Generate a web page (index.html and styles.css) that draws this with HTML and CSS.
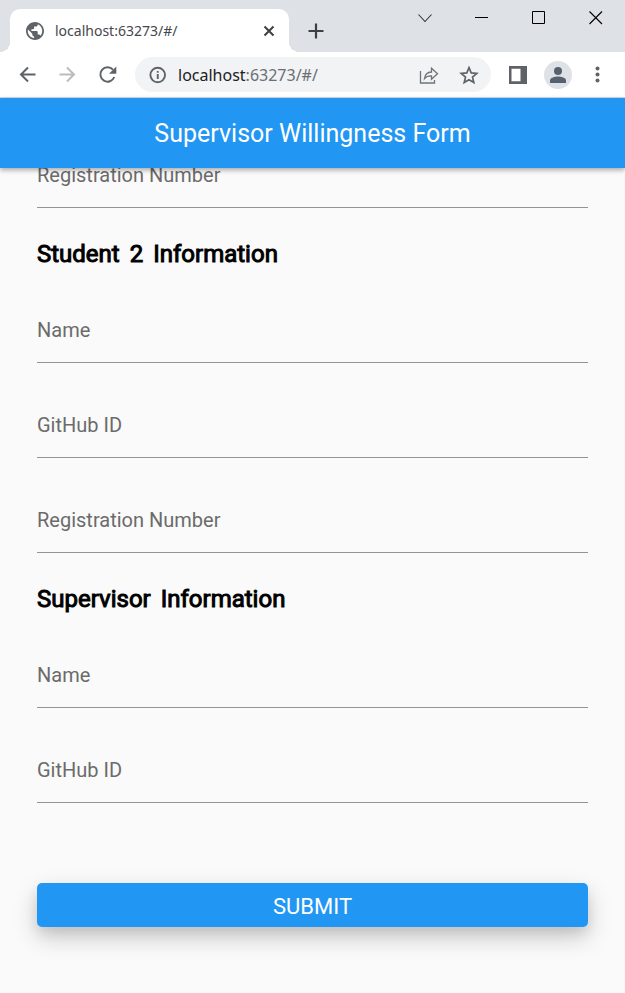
FILE: index.html
```html
<!DOCTYPE html>
<html lang="en">
<head>
<meta charset="utf-8">
<meta name="viewport" content="width=device-width, initial-scale=1">
<title>Supervisor Willingness Form</title>
<link rel="stylesheet" href="styles.css">
</head>
<body>
<div class="tab-strip">
  <div class="tab">
    <svg class="icon" width="18" height="18" viewBox="2 2 20 20" aria-hidden="true"><path fill="#5f6368" d="M12 2C6.480 2 2 6.480 2 12s4.480 10 10 10 10-4.480 10-10S17.520 2 12 2zm-1 17.930c-3.950-.490-7-3.850-7-7.930 0-.620.080-1.210.210-1.790L9 15v1c0 1.100.900 2 2 2v1.930zm6.900-2.540c-.260-.810-1-1.390-1.900-1.390h-1v-3c0-.550-.450-1-1-1H8v-2h2c.550 0 1-.450 1-1V7h2c1.100 0 2-.900 2-2v-.410c2.930 1.190 5 4.060 5 7.410 0 2.080-.800 3.970-2.100 5.390z"/></svg>
    <span class="tab-title">localhost:63273/#/</span>
    <button class="plain" aria-label="Close tab"><svg class="icon" width="12" height="12" viewBox="0 0 12 12"><path d="m1.5 1.5 9 9m0-9-9 9" fill="none" stroke="#3c4043" stroke-width="2"/></svg></button>
  </div>
  <button class="plain new-tab" aria-label="New tab"><svg class="icon" width="16" height="16" viewBox="0 0 16 16"><path d="M8 .5v15M.5 8h15" fill="none" stroke="#3c4043" stroke-width="2.2"/></svg></button>
  <div class="window-controls">
    <button class="plain" aria-label="Search tabs"><svg class="icon" width="14" height="14" viewBox="0 0 14 14"><path d="m.5 3.5 6.5 7 6.5-7" fill="none" stroke="#333" stroke-width="1.1"/></svg></button>
    <button class="plain" aria-label="Minimize"><svg class="icon" width="14" height="14" viewBox="0 0 14 14"><path d="M0 6.5h13" stroke="#000"/></svg></button>
    <button class="plain" aria-label="Maximize"><svg class="icon" width="14" height="14" viewBox="0 0 14 14"><path d="M.5.5h12v12H.5z" fill="none" stroke="#000"/></svg></button>
    <button class="plain" aria-label="Close"><svg class="icon" width="14" height="14" viewBox="0 0 14 14"><path d="m.5.5 12.500 12.500M13 .5.500 13" fill="none" stroke="#000" stroke-width="1.1"/></svg></button>
  </div>
</div>
<div class="toolbar">
  <div class="nav">
    <button class="plain" aria-label="Back"><svg class="icon" width="20" height="20" viewBox="0 0 20 20"><path d="M17.500 9.500H3m7-7L3 9.500l7 7" fill="none" stroke="#5f6368" stroke-width="2"/></svg></button>
    <button class="plain" aria-label="Forward"><svg class="icon" width="20" height="20" viewBox="0 0 20 20"><path d="M1.500 9.500H16m-7-7 7 7-7 7" fill="none" stroke="#babcbe" stroke-width="2"/></svg></button>
    <button class="plain" aria-label="Reload"><svg class="icon" width="20" height="20" viewBox="0 0 20 20"><path d="M16.300 12A7.200 7.200 0 1 1 15 4.700" fill="none" stroke="#5f6368" stroke-width="2"/><path d="M18.300 1.500v7.300H11Z" fill="#5f6368"/></svg></button>
  </div>
  <div class="omnibox">
    <svg class="icon" width="18" height="18" viewBox="0 0 18 18" aria-hidden="true"><circle cx="8.700" cy="9" r="7.300" fill="none" stroke="#5f6368" stroke-width="1.900"/><path d="M7.800 8h1.900v5H7.800zM7.800 5h1.900v1.800H7.800z" fill="#5f6368"/></svg>
    <span class="url"><span class="host">localhost</span>:63273/#/</span>
    <button class="plain" aria-label="Share"><svg class="icon" width="20" height="20" viewBox="0 0 20 20"><path d="M1.500 6v12h14v-3M5.500 13.500C6 9.500 8.500 7.200 12.500 7V3.200l6 5.600-6 5.400v-3.400c-3.200-.1-5.400.7-7 2.700Z" fill="none" stroke="#6f7377" stroke-width="1.300"/></svg></button>
    <button class="plain" aria-label="Bookmark"><svg class="icon" width="20" height="20" viewBox="0 0 20 20"><path d="m10 2.700 2.200 5.200 5.600.5-4.300 3.700 1.300 5.500L10 14.700l-4.800 2.900 1.300-5.500-4.300-3.700 5.600-.5Z" fill="none" stroke="#5f6368" stroke-width="1.700"/></svg></button>
  </div>
  <div class="actions">
    <button class="plain" aria-label="Side panel"><svg class="icon" width="18" height="18" viewBox="0 0 18 18"><path fill-rule="evenodd" d="M0 0h18v18H0ZM2.500 2.800v12.400h9V2.800Z" fill="#5f6368"/></svg></button>
    <button class="plain avatar" aria-label="Profile"><svg class="icon" width="16" height="16" viewBox="0 0 16 16"><circle cx="8" cy="4" r="4" fill="#56606f"/><path d="M0 16v-2.500C0 10.500 5 9.500 8 9.500s8 1 8 4V16Z" fill="#56606f"/></svg></button>
    <button class="plain" aria-label="Menu"><svg class="icon" width="18" height="18" viewBox="0 0 18 18"><g fill="#5f6368"><circle cx="8.500" cy="2.500" r="2"/><circle cx="8.500" cy="8.500" r="2"/><circle cx="8.500" cy="14.500" r="2"/></g></svg></button>
  </div>
</div>
<header class="app-bar"><h1>Supervisor Willingness Form</h1></header>
<main class="page">
  <form class="form">
    <div class="field"><label for="s1-reg">Registration Number</label><input id="s1-reg" type="text"></div>
    <h2><span>Student</span> <span>2</span> <span>Information</span></h2>
    <div class="field"><label for="s2-name">Name</label><input id="s2-name" type="text"></div>
    <div class="field"><label for="s2-git">GitHub ID</label><input id="s2-git" type="text"></div>
    <div class="field"><label for="s2-reg">Registration Number</label><input id="s2-reg" type="text"></div>
    <h2><span>Supervisor</span> <span>Information</span></h2>
    <div class="field"><label for="sup-name">Name</label><input id="sup-name" type="text"></div>
    <div class="field"><label for="sup-git">GitHub ID</label><input id="sup-git" type="text"></div>
    <button class="submit" type="button">SUBMIT</button>
  </form>
</main>
</body>
</html>
```
FILE: styles.css
```css
* { box-sizing: border-box; }

body {
  margin: 0;
  min-height: 100vh;
  display: flex;
  flex-direction: column;
  background: #fafafa;
  font-family: Roboto, sans-serif;
}

.icon { display: block; flex: none; }

.plain {
  display: flex;
  align-items: center;
  justify-content: center;
  padding: 0;
  border: 0;
  background: none;
}

/* Browser tab strip */
.tab-strip {
  display: flex;
  height: 52px;
  padding: 9px 22px 0 10px;
  background: #dee1e6;
  font-family: "Noto Sans", sans-serif;
}

.tab {
  position: relative;
  display: flex;
  align-items: center;
  gap: 11px;
  flex: 0 1 279px;
  padding: 0 14px 0 16px;
  border-radius: 10px 10px 0 0;
  background: #fff;
}

.tab::before,
.tab::after {
  content: "";
  position: absolute;
  bottom: 0;
  width: 10px;
  height: 10px;
}

.tab::before {
  right: 100%;
  background: radial-gradient(circle at 0 0, #dee1e6 10px, #fff 10px);
}

.tab::after {
  left: 100%;
  background: radial-gradient(circle at 100% 0, #dee1e6 10px, #fff 10px);
}

.tab-title {
  flex: 1;
  font-size: 14px;
  color: #45484c;
}

.new-tab { margin-left: 19px; }

.window-controls {
  display: flex;
  align-items: flex-start;
  gap: 43px;
  margin-left: auto;
  padding-top: 2px;
}

/* Browser toolbar */
.toolbar {
  display: flex;
  align-items: center;
  height: 46px;
  padding: 0 18px;
  border-bottom: 1px solid #d5dce3;
  background: #fff;
}

.nav { display: flex; gap: 20px; }

.omnibox {
  display: flex;
  align-items: center;
  gap: 20px;
  flex: 1;
  height: 35px;
  margin: 0 18px 0 17px;
  padding: 0 12px 0 14px;
  border-radius: 18px;
  background: #f1f3f4;
  font-family: "Noto Sans", sans-serif;
}

.url {
  flex: 1;
  margin-left: -9px;
  font-size: 16px;
  color: #6b6f73;
}

.host { color: #202124; }

.actions { display: flex; align-items: center; gap: 17px; }

.avatar {
  width: 28px;
  height: 28px;
  border-radius: 50%;
  background: #dee1e6;
}

/* Application */
.app-bar {
  position: relative;
  z-index: 1;
  display: flex;
  align-items: center;
  justify-content: center;
  height: 70px;
  background: #2196f3;
  box-shadow: 0 2px 5px rgba(0, 0, 0, 0.34);
}

.app-bar h1 {
  margin: 0;
  font-size: 25px;
  font-weight: 400;
  color: #fff;
}

.page {
  flex: 1;
  padding: 0 37px 66px;
}

/* The form rests scrolled partly under the app bar. */
.form {
  display: flex;
  flex-direction: column;
  gap: 30px;
  margin-top: -25px;
}

.field { display: grid; height: 65px; }

.field label,
.field input {
  grid-area: 1 / 1;
  font: 400 20px/24px Roboto, sans-serif;
}

.field label {
  align-self: center;
  padding-bottom: 2px;
  color: #6b6b6b;
}

.field input {
  width: 100%;
  padding: 0;
  border: 0;
  border-bottom: 1px solid #949494;
  background: none;
  outline: none;
}

h2 {
  display: flex;
  gap: 10px;
  margin: 0;
  padding-top: 2px;
  font-size: 24px;
  font-weight: 400;
  line-height: 28px;
  color: #000;
  -webkit-text-stroke: 1px #000;
}

.submit {
  height: 44px;
  margin-top: 50px;
  padding: 3px 0 0;
  border: 0;
  border-radius: 5px;
  background: #2196f3;
  box-shadow: 0 10px 25px rgba(0, 0, 0, 0.2), 0 6px 12px rgba(0, 0, 0, 0.08);
  color: #fff;
  font: 400 22px/26px Roboto, sans-serif;
}
```
